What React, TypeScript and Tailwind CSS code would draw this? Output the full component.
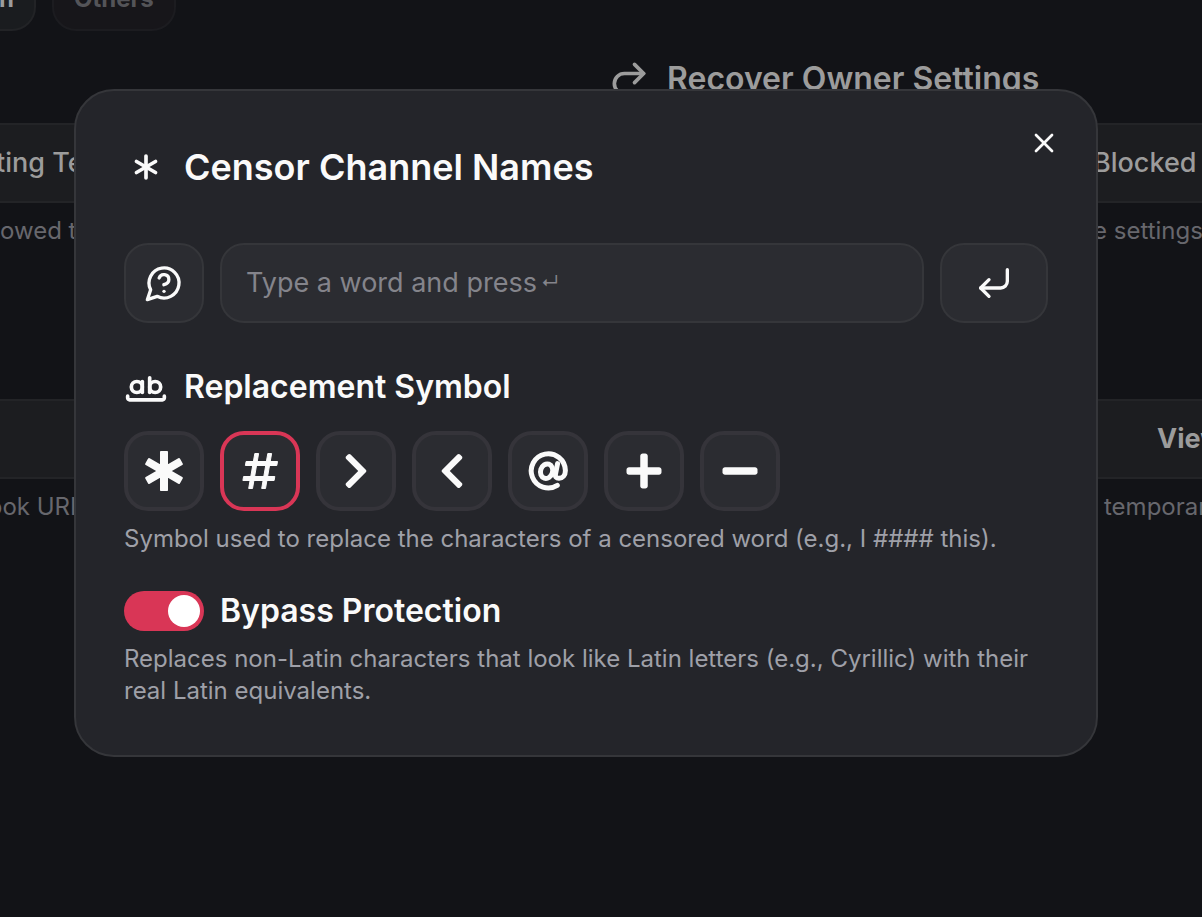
import * as React from "react";
import { useState } from "react";
import type { ReactNode } from "react";
import { Asterisk, CornerDownLeft, Redo2, WholeWord, X } from "lucide-react";
import { FaChevronLeft, FaChevronRight, FaMinus, FaPlus } from "react-icons/fa";

function AsteriskSymbol() {
  return (
    <svg width="40" height="40" viewBox="0 0 40 40" fill="currentColor" aria-hidden="true">
      <rect x="16" y="0" width="8" height="40" rx="0.8" />
      <rect x="16" y="0" width="8" height="40" rx="1.2" transform="rotate(60 20 20)" />
      <rect x="16" y="0" width="8" height="40" rx="1.2" transform="rotate(-60 20 20)" />
    </svg>
  );
}

function HashSymbol() {
  return (
    <svg
      width="40"
      height="40"
      viewBox="0 0 40 40"
      fill="currentColor"
      stroke="currentColor"
      strokeWidth="1"
      strokeLinejoin="round"
      aria-hidden="true"
    >
      <path d="M14.8 2.5h3.8L12.5 37.5H8.7z" />
      <path d="M27.8 2.5h3.8L25.5 37.5h-3.8z" />
      <path d="M6.1 10.5h31.4l-.7 4H5.4z" />
      <path d="M3.6 25.5h31.2l-.7 4H2.9z" />
    </svg>
  );
}

function AtSymbol() {
  return (
    <svg
      width="40"
      height="40"
      viewBox="0 0 40 40"
      fill="none"
      stroke="currentColor"
      strokeWidth="5"
      strokeLinecap="round"
      strokeLinejoin="round"
      aria-hidden="true"
    >
      <path d="M29.3 34.4A17.1 17.1 0 1 1 37.4 19.5C37.4 24.2 34.6 27.3 31 27.3C28.2 27.3 27 25.6 27.5 23L29.6 12.6" />
      <ellipse cx="18.6" cy="20.2" rx="6" ry="7.4" transform="rotate(18 18.6 20.2)" />
    </svg>
  );
}

const symbols = [
  { value: "*", label: "Asterisk", icon: <AsteriskSymbol /> },
  { value: "#", label: "Hash", icon: <HashSymbol /> },
  { value: ">", label: "Greater than", icon: <FaChevronRight size={40} /> },
  { value: "<", label: "Less than", icon: <FaChevronLeft size={40} /> },
  { value: "@", label: "At", icon: <AtSymbol /> },
  { value: "+", label: "Plus", icon: <FaPlus size={40} /> },
  { value: "-", label: "Minus", icon: <FaMinus size={40} /> },
];

function QuestionBubble() {
  return (
    <svg
      width="40"
      height="40"
      viewBox="0 0 24 24"
      fill="none"
      stroke="currentColor"
      strokeWidth="2"
      strokeLinecap="round"
      strokeLinejoin="round"
      aria-hidden="true"
    >
      <path d="M7.9 20A9 9 0 1 0 4 16.1L2 22Z" />
      <path d="M9.09 9a3 3 0 0 1 5.83 1c0 2-3 3-3 3" />
      <path d="M12 17h.01" />
    </svg>
  );
}

function BackdropPanel({ children }: { children?: ReactNode }) {
  return (
    <div className="flex h-20 items-center border-y-2 border-[#232427] bg-[#1c1d20] text-[27px] font-medium whitespace-nowrap text-[#9c9c9c]">
      {children}
    </div>
  );
}

function BackdropNote({ children }: { children: ReactNode }) {
  return <p className="mt-3 h-8 text-2xl leading-8 whitespace-nowrap text-[#67676d]">{children}</p>;
}

function Backdrop() {
  return (
    <div aria-hidden="true" className="min-h-screen overflow-hidden">
      <div className="flex h-[31px] items-end gap-4 overflow-hidden text-2xl font-bold">
        <span className="flex h-16 w-9 shrink-0 items-center justify-end rounded-r-3xl border-2 border-l-0 border-[#222326] bg-[#1a1c1f] pr-5 text-[#9c9c9c]">
          n
        </span>
        <span className="flex h-16 shrink-0 items-center rounded-3xl border-2 border-[#1c1c20] bg-[#17161a] px-5 text-[#545458]">
          Others
        </span>
      </div>
      <div className="mt-6 grid grid-cols-2 gap-x-3">
        <div>
          <div className="mb-5 h-12" />
          <BackdropPanel>
            <span className="-ml-1">ting Te</span>
          </BackdropPanel>
          <BackdropNote>owed t</BackdropNote>
          <div className="h-[152px]" />
          <BackdropPanel />
          <BackdropNote>
            <span className="-ml-3">ook URL</span>
          </BackdropNote>
        </div>
        <div>
          <div className="mb-5 flex h-12 items-center gap-4 text-[#9c9c9c]">
            <Redo2 size={44} />
            <h2 className="text-[32px] leading-none font-semibold whitespace-nowrap">
              Recover Owner Settings
            </h2>
          </div>
          <BackdropPanel>
            <span className="pl-[486px]">Blocked</span>
          </BackdropPanel>
          <BackdropNote>
            <span className="pl-[486px]">e settings</span>
          </BackdropNote>
          <div className="h-[152px]" />
          <BackdropPanel>
            <span className="pl-[550px] font-bold">View</span>
          </BackdropPanel>
          <BackdropNote>
            <span className="pl-[497px]">temporar</span>
          </BackdropNote>
        </div>
      </div>
    </div>
  );
}

export default function App() {
  const [word, setWord] = useState("");
  const [symbol, setSymbol] = useState("#");
  const [bypass, setBypass] = useState(true);

  return (
    <div className="relative min-h-screen overflow-hidden bg-[#121317] font-['Inter',sans-serif]">
      <Backdrop />
      <div className="absolute inset-0 flex items-start justify-center pt-[89px] pr-[30px]">
        <section
          role="dialog"
          aria-labelledby="dialog-title"
          className="relative w-full max-w-[1024px] rounded-[40px] border-2 border-[#35363a] bg-[#24252a] p-12 text-[#fafafa]"
        >
          <button
            type="button"
            aria-label="Close"
            className="absolute top-9 right-9 flex size-8 items-center justify-center"
          >
            <X size={32} />
          </button>

          <div className="flex h-14 items-center gap-4">
            <Asterisk size={44} />
            <h1 id="dialog-title" className="text-4xl font-semibold">
              Censor Channel Names
            </h1>
          </div>

          <form className="mt-12 flex gap-4" onSubmit={(e) => e.preventDefault()}>
            <button
              type="button"
              aria-label="Help"
              className="flex size-20 shrink-0 items-center justify-center rounded-3xl border-2 border-[#35363a] bg-[#2b2c31]"
            >
              <QuestionBubble />
            </button>
            <div className="relative min-w-0 flex-1">
              <input
                id="word"
                type="text"
                value={word}
                onChange={(e) => setWord(e.target.value)}
                className="h-20 w-full rounded-3xl border-2 border-[#35363a] bg-[#2b2c31] px-6 text-[27px] outline-none"
              />
              <label
                htmlFor="word"
                className={
                  word
                    ? "sr-only"
                    : "pointer-events-none absolute inset-0 flex items-center gap-1 px-[26px] text-[27px] whitespace-nowrap text-[#84848b]"
                }
              >
                Type a word and press <span className="text-lg">↵</span>
              </label>
            </div>
            <button
              type="submit"
              aria-label="Add word"
              className="flex h-20 w-[108px] shrink-0 items-center justify-center rounded-3xl border-2 border-[#35363a] bg-[#2b2c31]"
            >
              <CornerDownLeft size={40} />
            </button>
          </form>

          <fieldset className="mt-10">
            <legend className="flex h-12 items-center gap-4">
              <WholeWord size={44} />
              <span className="text-[32px] font-semibold">Replacement Symbol</span>
            </legend>
            <div className="mt-5 flex flex-wrap gap-4">
              {symbols.map((s) => (
                <label key={s.value} className="cursor-pointer">
                  <input
                    type="radio"
                    name="symbol"
                    aria-label={s.label}
                    value={s.value}
                    checked={symbol === s.value}
                    onChange={() => setSymbol(s.value)}
                    className="peer sr-only"
                  />
                  <span className="flex size-20 items-center justify-center rounded-3xl border-4 border-[#35343a] bg-[#2b2c31] peer-checked:border-[#d93656]">
                    {s.icon}
                  </span>
                </label>
              ))}
            </div>
            <p className="mt-3 text-2xl leading-8 text-[#9fa0a8]">
              Symbol used to replace the characters of a censored word (e.g., I #### this).
            </p>
          </fieldset>

          <label className="mt-8 flex h-12 cursor-pointer items-center gap-4">
            <input
              type="checkbox"
              role="switch"
              checked={bypass}
              onChange={(e) => setBypass(e.target.checked)}
              className="peer sr-only"
            />
            <span className="flex h-10 w-20 justify-start rounded-full bg-[#3a3b40] p-1 peer-checked:justify-end peer-checked:bg-[#d93656]">
              <span className="size-8 rounded-full bg-white" />
            </span>
            <span className="text-[32px] font-semibold">Bypass Protection</span>
          </label>
          <p className="mt-2 text-2xl leading-8 text-[#9fa0a8]">
            Replaces non-Latin characters that look like Latin letters (e.g., Cyrillic) with their
            real Latin equivalents.
          </p>
        </section>
      </div>
    </div>
  );
}
